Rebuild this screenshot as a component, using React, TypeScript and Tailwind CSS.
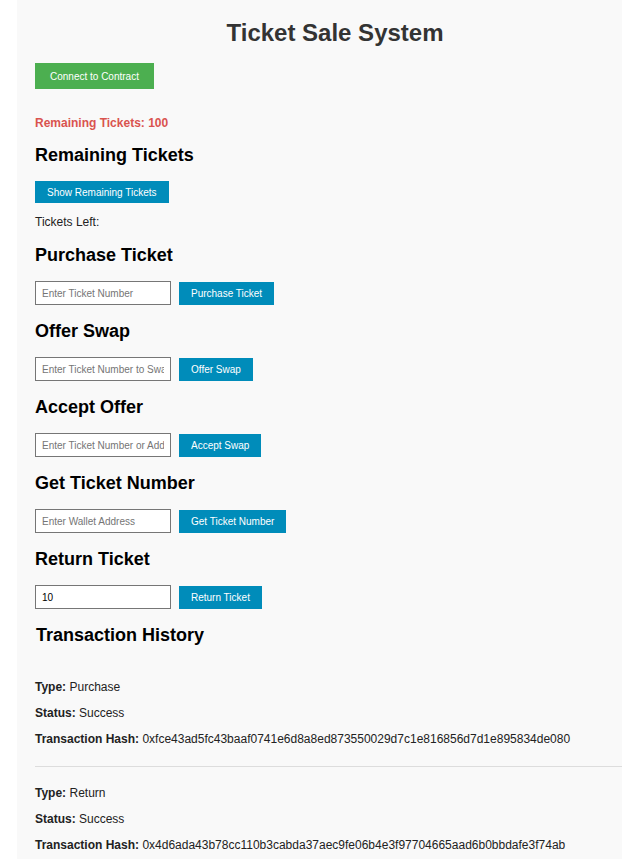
import React from "react";

const sections = [
  { title: "Purchase Ticket", placeholder: "Enter Ticket Number", value: "", button: "Purchase Ticket" },
  { title: "Offer Swap", placeholder: "Enter Ticket Number to Swap", value: "", button: "Offer Swap" },
  { title: "Accept Offer", placeholder: "Enter Ticket Number or Address", value: "", button: "Accept Swap" },
  { title: "Get Ticket Number", placeholder: "Enter Wallet Address", value: "", button: "Get Ticket Number" },
  { title: "Return Ticket", placeholder: "Enter Ticket Number", value: "10", button: "Return Ticket" },
];

const transactions = [
  {
    type: "Purchase",
    status: "Success",
    hash: "0xfce43ad5fc43baaf0741e6d8a8ed873550029d7c1e816856d7d1e895834de080",
  },
  {
    type: "Return",
    status: "Success",
    hash: "0x4d6ada43b78cc110b3cabda37aec9fe06b4e3f97704665aad6b0bbdafe3f74ab",
  },
];

function Heading({ children, className = "" }: { children: React.ReactNode; className?: string }) {
  return (
    <h2 className={`text-[18px] leading-[22px] font-bold text-black ${className}`}>{children}</h2>
  );
}

export default function App() {
  return (
    <div
      className="w-[622px] h-[859px] overflow-hidden bg-white"
      style={{ fontFamily: '"Liberation Sans", Arial, sans-serif' }}
    >
      <div className="ml-[17px] w-[636px] min-h-full bg-[#f9f9f9] px-[18px] pt-[19px] pb-8">
        <h1 className="text-center text-[24px] leading-[28px] font-bold text-[#333]">
          Ticket Sale System
        </h1>

        <button className="block mt-[16px] h-[26px] px-[15px] bg-[#4caf50] text-white text-[10px]">
          Connect to Contract
        </button>

        <p className="mt-[27px] text-[12px] leading-[14px] font-bold text-[#d9534f]">
          Remaining Tickets: 100
        </p>

        <Heading className="mt-[14px]">Remaining Tickets</Heading>
        <button className="block mt-[15px] h-[22px] px-3 bg-[#008cba] text-white text-[10px]">
          Show Remaining Tickets
        </button>
        <p className="mt-[12px] text-[12px] leading-[14px] text-[#222]">Tickets Left:</p>

        {sections.map((s) => (
          <div key={s.title}>
            <Heading className="mt-[15px]">{s.title}</Heading>
            <div className="mt-[15px] flex items-center gap-2">
              <input
                className="w-[136px] h-[24px] border border-[#767676] bg-white px-[6px] text-[10px] text-black placeholder:text-[#757575] outline-none"
                placeholder={s.placeholder}
                defaultValue={s.value}
              />
              <button className="h-[23px] px-3 bg-[#008cba] text-white text-[10px]">{s.button}</button>
            </div>
          </div>
        ))}

        <Heading className="mt-[15px] ml-px">Transaction History</Heading>

        <div className="mt-[34px]">
          {transactions.map((t, i) => (
            <div
              key={t.hash}
              className={`flex flex-col gap-[12px] text-[12px] leading-[14px] text-[#222] ${
                i === 0 ? "pb-[20px] border-b border-[#ddd]" : "pt-[19px]"
              }`}
            >
              <p>
                <span className="font-bold">Type:</span> {t.type}
              </p>
              <p>
                <span className="font-bold">Status:</span> {t.status}
              </p>
              <p>
                <span className="font-bold">Transaction Hash:</span> {t.hash}
              </p>
            </div>
          ))}
        </div>
      </div>
    </div>
  );
}
